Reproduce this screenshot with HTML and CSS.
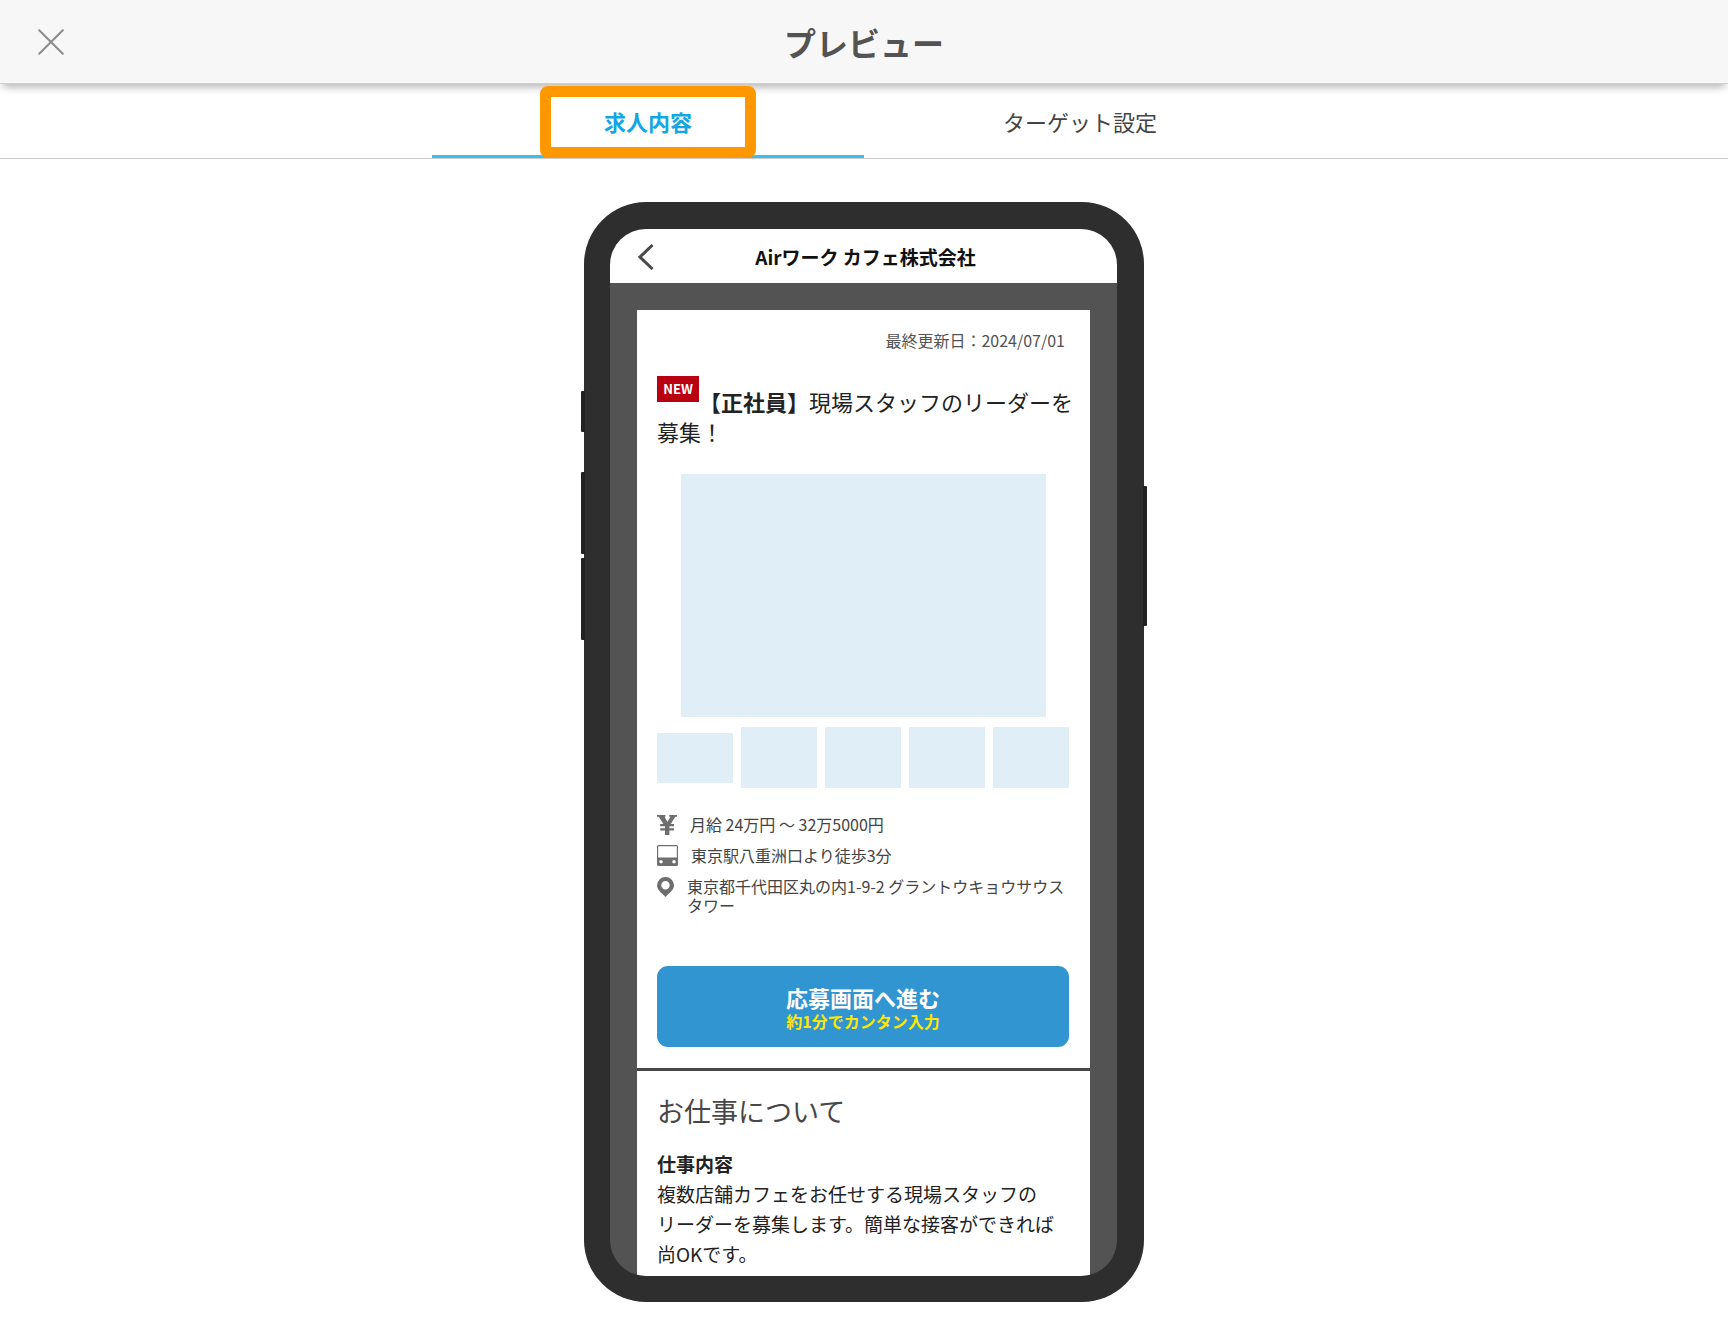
FILE: index.html
```html
<!DOCTYPE html>
<html lang="ja">
<head>
  <meta charset="UTF-8">
  <meta name="viewport" content="width=device-width, initial-scale=1.0">
  <title>プレビュー</title>
  <link rel="stylesheet" href="styles.css">
</head>
<body>
  <header class="header">
    <button class="close" type="button" aria-label="閉じる">
      <svg width="26" height="26" viewBox="0 0 26 26"><path d="M1.200 1.200l23.600 23.600M24.800 1.200L1.200 24.800"/></svg>
    </button>
    <h1>プレビュー</h1>
  </header>

  <nav class="tabs">
    <a class="tab active" href="#job">求人内容</a>
    <a class="tab" href="#target">ターゲット設定</a>
  </nav>

  <main class="preview" id="job">
    <div class="phone">
      <span class="key key-silent"></span>
      <span class="key key-up"></span>
      <span class="key key-down"></span>
      <span class="key key-power"></span>

      <div class="screen">
        <div class="bar">
          <button class="back" type="button" aria-label="戻る">
            <svg width="16" height="26" viewBox="0 0 16 26"><path d="M14.5 1L2 13l12.5 12"/></svg>
          </button>
          <h2>Airワーク カフェ株式会社</h2>
        </div>

        <article class="card">
          <section class="summary">
            <p class="date">最終更新日：2024/07/01</p>
            <h3 class="title"><span class="new">NEW</span><strong>【正社員】</strong>現場スタッフのリーダーを<br>募集！</h3>

            <div class="photo"></div>
            <div class="thumbs">
              <div class="thumb current"></div>
              <div class="thumb"></div>
              <div class="thumb"></div>
              <div class="thumb"></div>
              <div class="thumb"></div>
            </div>

            <ul class="info">
              <li>
                <svg width="20" height="20" viewBox="0 0 20 20"><path d="M0 0h8.400v1.800h-.8L10.400 7l3-5.200h-1.200V0H20v1.800h-1.800L13.800 9H17v2.200h-4.600v2H17v2.200h-4.600V20H8v-4.600H3.200v-2.200H8v-2H3.200V9h3.200L1.800 1.800H0z"/></svg>
                <span>月給 24万円 ～ 32万5000円</span>
              </li>
              <li>
                <svg width="21" height="21" viewBox="0 0 21 21"><path fill-rule="evenodd" d="M1.600 0h17.800Q21 0 21 1.600v17.800Q21 21 19.400 21H1.600Q0 21 0 19.400V1.600Q0 0 1.600 0zM1.200 1.200v11.200h18.600V1.200zM4 15a1.800 1.800 0 100 3.600A1.800 1.800 0 004 15zM17 15a1.800 1.800 0 100 3.600 1.800 1.800 0 000-3.600z"/></svg>
                <span>東京駅八重洲口より徒歩3分</span>
              </li>
              <li class="address">
                <svg width="17" height="20" viewBox="0 0 17 20"><path fill-rule="evenodd" d="M8.500 0A8.400 8.400 0 000 8.300C0 12.600 4 15.500 8.500 20 13 15.500 17 12.600 17 8.300A8.400 8.400 0 008.500 0zM8.500 4a4.200 4.200 0 110 8.400 4.200 4.200 0 010-8.400z"/></svg>
                <span>東京都千代田区丸の内1-9-2 グラントウキョウサウスタワー</span>
              </li>
            </ul>

            <button class="apply" type="button">
              応募画面へ進む
              <small>約1分でカンタン入力</small>
            </button>
          </section>

          <section class="about">
            <h3>お仕事について</h3>
            <h4>仕事内容</h4>
            <p>複数店舗カフェをお任せする現場スタッフの<br>リーダーを募集します。簡単な接客ができれば<br>尚OKです。</p>
          </section>
        </article>
      </div>
    </div>
  </main>
</body>
</html>
```

FILE: styles.css
```css
*, *::after { margin: 0; padding: 0; box-sizing: border-box; }
body {
  background: #fff;
  color: #222;
  font-family: "Noto Sans CJK JP", sans-serif;
  font-size: 16px;
}
button {
  background: none;
  border: none;
  font-family: inherit;
  cursor: pointer;
}
svg { display: block; flex-shrink: 0; }

/* header */
.header {
  display: grid;
  grid-template-columns: 1fr auto 1fr;
  align-items: center;
  height: 84px;
  padding: 0 38px;
  background: #f7f7f7;
  border-bottom: 1px solid #cfcfcf;
  box-shadow: 0 6px 8px -3px rgba(0, 0, 0, 0.3);
  position: relative;
}
.header h1 {
  font-size: 32px;
  line-height: 48px;
  color: #535353;
}
.close { justify-self: start; }
.close svg { fill: none; stroke: #8c8c8c; stroke-width: 2; stroke-linecap: round; }

/* tabs */
.tabs {
  display: flex;
  justify-content: center;
  height: 75px;
  border-bottom: 1px solid #ccc;
}
.tab {
  display: flex;
  justify-content: center;
  align-items: center;
  width: 25%;
  padding-top: 3px;
  font-size: 22px;
  color: #444;
  text-decoration: none;
  border-bottom: 3px solid transparent;
  position: relative;
}
.tab.active {
  color: #14a5e3;
  font-weight: bold;
  border-bottom-color: #3dbdec;
}
.tab.active::after {
  content: "";
  position: absolute;
  top: 2px;
  bottom: -3px;
  left: 25%;
  width: 50%;
  border: 11px solid #ff9800;
  border-radius: 8px;
}

/* phone */
.preview {
  display: flex;
  justify-content: center;
  padding: 43px 0 38px;
}
.phone {
  width: 560px;
  padding: 27px 27px 26px 26px;
  background: #2e2e2e;
  border-radius: 62px;
  position: relative;
}
.key {
  position: absolute;
  left: -3px;
  width: 4px;
  height: 82px;
  background: #222;
  border-radius: 1px;
}
.key-silent { top: 189px; height: 41px; }
.key-up { top: 270px; }
.key-down { top: 356px; }
.key-power { top: 284px; left: auto; right: -3px; height: 140px; }
.screen {
  background: #535353;
  border-radius: 36px;
  overflow: hidden;
}
.bar {
  display: grid;
  grid-template-columns: 1fr auto 1fr;
  align-items: center;
  height: 54px;
  padding: 1px 24px 0 28px;
  background: #fff;
}
.bar h2 {
  font-size: 19px;
  line-height: 28px;
  color: #111;
}
.back { justify-self: start; }
.back svg { fill: none; stroke: #4a4a4a; stroke-width: 3; }
.card {
  margin: 27px 27px 0;
  background: #fff;
}

/* summary */
.summary {
  padding: 18px 21px 21px 20px;
  border-bottom: 3px solid #474747;
}
.date {
  padding-right: 4px;
  line-height: 24px;
  color: #535353;
  text-align: right;
}
.title {
  margin-top: 24px;
  font-size: 22px;
  font-weight: normal;
  line-height: 30px;
  white-space: nowrap;
}
.new {
  display: inline-block;
  width: 42px;
  background: #b90010;
  color: #fff;
  font-size: 13px;
  font-weight: bold;
  line-height: 26px;
  text-align: center;
  vertical-align: 17px;
}
.photo {
  width: 365px;
  height: 243px;
  margin: 28px auto 10px;
  background: #e0eef8;
}
.thumbs {
  display: flex;
  align-items: center;
  gap: 8px;
}
.thumb {
  flex: 1;
  height: 61px;
  background: #e0eef8;
}
.thumb.current { height: 50px; }
.info {
  margin-top: 21px;
  list-style: none;
  color: #444;
}
.info li {
  display: flex;
  align-items: center;
  gap: 13px;
  line-height: 31px;
}
.info svg { fill: #6e6e6e; }
.info .address {
  align-items: flex-start;
  padding-top: 6px;
  line-height: 19px;
}
.apply {
  display: block;
  width: 100%;
  height: 81px;
  margin-top: 51px;
  padding-top: 3px;
  background: #3195d1;
  border-radius: 11px;
  color: #fff;
  font-size: 22px;
  font-weight: bold;
  line-height: 26px;
}
.apply small {
  display: block;
  font-size: 16px;
  line-height: 22px;
  color: #ffe600;
}

/* about */
.about {
  padding: 20px 20px 7px;
  font-size: 19px;
  line-height: 30px;
}
.about h3 {
  margin-bottom: 18px;
  font-size: 27px;
  font-weight: normal;
  line-height: 40px;
  color: #474747;
}
.about h4 { font-size: 19px; }
.about p { white-space: nowrap; }
```
